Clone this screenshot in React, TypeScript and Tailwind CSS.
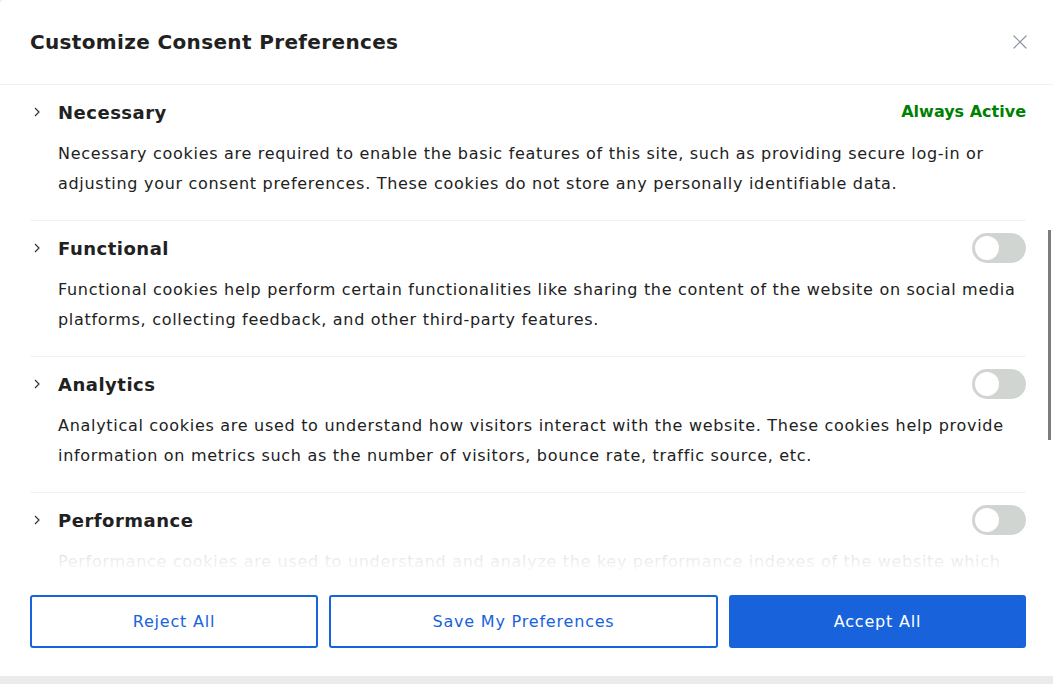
import { X } from "lucide-react";

const sections = [
    {
        title: "Necessary",
        text: "Necessary cookies are required to enable the basic features of this site, such as providing secure log-in or adjusting your consent preferences. These cookies do not store any personally identifiable data.",
        alwaysActive: true,
    },
    {
        title: "Functional",
        text: "Functional cookies help perform certain functionalities like sharing the content of the website on social media platforms, collecting feedback, and other third-party features.",
    },
    {
        title: "Analytics",
        text: "Analytical cookies are used to understand how visitors interact with the website. These cookies help provide information on metrics such as the number of visitors, bounce rate, traffic source, etc.",
    },
    {
        title: "Performance",
        text: "Performance cookies are used to understand and analyze the key performance indexes of the website which helps in delivering a better user experience for the visitors.",
    },
];

function Chevron() {
    return (
        <svg width="8" height="12" viewBox="0 0 8 12" className="shrink-0 text-[#333]">
            <path d="M2 2 L6 6 L2 10" fill="none" stroke="currentColor" strokeWidth="1.2" />
        </svg>
    );
}

function Toggle() {
    return (
        <div className="w-[54px] h-[30px] rounded-full bg-[#d0d5d2] p-[3px] flex items-center">
            <div className="w-6 h-6 rounded-full bg-white" />
        </div>
    );
}

export default function App() {
    return (
        <div
            className="w-[1053px] h-[684px] bg-[#ebebeb] overflow-hidden"
            style={{ fontFamily: "'DejaVu Sans', sans-serif" }}
        >
            <div className="relative h-[676px] bg-white rounded-tl-[4px] flex flex-col">
                <div className="h-[85px] shrink-0 flex items-center justify-between pl-[30px] pr-[21px] border-b border-[#f0f0f0]">
                    <h2 className="text-[20px] font-bold text-[#212121] tracking-[0.35px]">
                        Customize Consent Preferences
                    </h2>
                    <X size={24} strokeWidth={1.2} className="text-[#8a93a6]" />
                </div>

                <div className="relative flex-1 min-h-0 overflow-hidden pl-[30px] pr-[27px]">
                    {sections.map((s) => (
                        <div key={s.title} className="pt-3 pb-[21px] border-b border-[#f2f2f2]">
                            <div className="h-[30px] flex items-center">
                                <div className="w-[28px] flex items-center pl-[3px]">
                                    <Chevron />
                                </div>
                                <span className="flex-1 text-[18px] font-bold text-[#212121] tracking-[0.5px]">
                                    {s.title}
                                </span>
                                {s.alwaysActive ? (
                                    <span className="text-[16px] font-bold text-[#008000]">Always Active</span>
                                ) : (
                                    <Toggle />
                                )}
                            </div>
                            <p className="mt-3 pl-[28px] text-[16px] leading-[30px] text-[#212121] tracking-[0.7px]">
                                {s.text}
                            </p>
                        </div>
                    ))}
                    <div className="absolute left-0 right-0 bottom-0 h-[34px] bg-gradient-to-t from-white via-white/90 to-white/70" />
                </div>

                <div className="shrink-0 flex gap-[11px] pl-[30px] pr-[27px] pt-5 pb-[28px] text-[16px] tracking-[0.8px]">
                    <button className="w-[288px] h-[53px] border-2 border-[#1863dc] rounded-[3px] text-[#1863dc]">
                        Reject All
                    </button>
                    <button className="w-[389px] h-[53px] border-2 border-[#1863dc] rounded-[3px] text-[#1863dc]">
                        Save My Preferences
                    </button>
                    <button className="flex-1 h-[53px] border-2 border-[#1863dc] bg-[#1863dc] rounded-[3px] text-white">
                        Accept All
                    </button>
                </div>

                <div className="absolute right-[2px] top-[230px] w-[3px] h-[210px] bg-[#7d7d7d]" />
            </div>
        </div>
    );
}
